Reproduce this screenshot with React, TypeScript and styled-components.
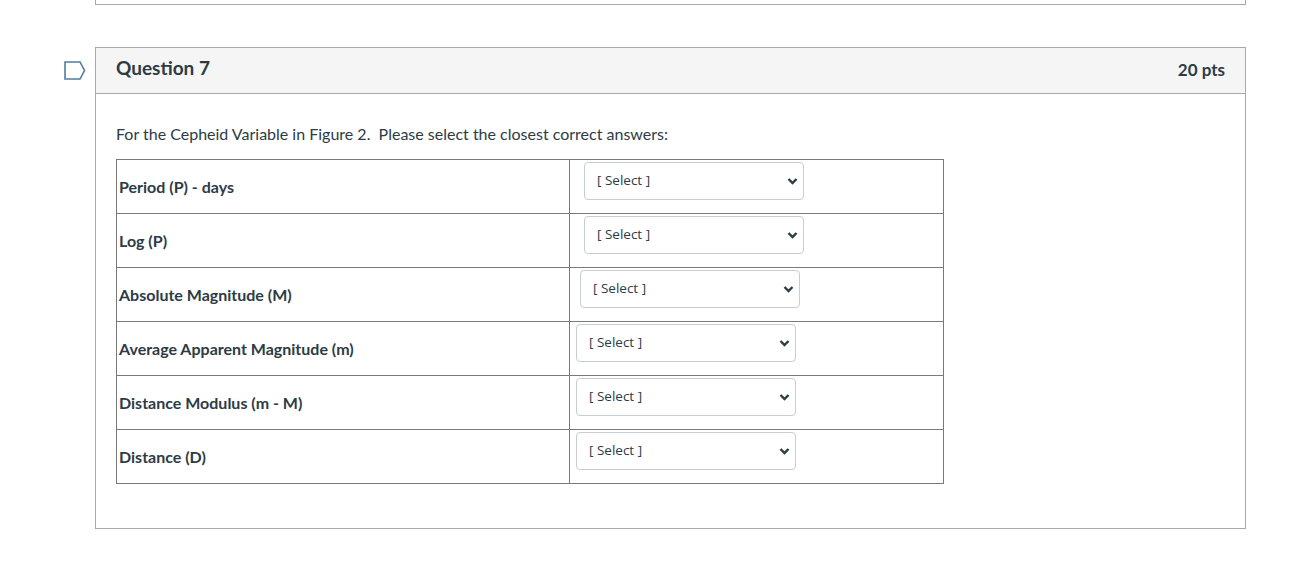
import styled, { createGlobalStyle } from 'styled-components';

const GlobalStyle = createGlobalStyle`
  body {
    margin: 0;
    background: #fff;
    font-family: Lato, "Liberation Sans", sans-serif;
    color: #2d3b45;
  }
`;

const rows = [
  { label: 'Period (P) - days', offset: 14 },
  { label: 'Log (P)', offset: 14 },
  { label: 'Absolute Magnitude (M)', offset: 10 },
  { label: 'Average Apparent Magnitude (m)', offset: 6 },
  { label: 'Distance Modulus (m - M)', offset: 6 },
  { label: 'Distance (D)', offset: 6 },
];

const Chevron = () => (
  <svg width="11" height="8" viewBox="0 0 11 8">
    <path d="M1.5 2 L5.5 6 L9.5 2" fill="none" stroke="#2d3b45" strokeWidth="2.4" />
  </svg>
);

const Flag = () => (
  <svg width="22" height="19" viewBox="0 0 22 19">
    <path d="M1 1 H16 L20.5 9.5 L16 18 H1 Z" fill="none" stroke="#4f7ca0" strokeWidth="1.6" />
  </svg>
);

const App = () => {
  return (
    <>
      <GlobalStyle />
      <Page>
        <PrevCard />
        <QuestionRow>
          <Gutter>
            <Flag />
          </Gutter>
          <Card>
            <Header>
              <Title>Question 7</Title>
              <Points>20 pts</Points>
            </Header>
            <Body>
              <Prompt>For the Cepheid Variable in Figure 2.&nbsp; Please select the closest correct answers:</Prompt>
              <Table>
                <tbody>
                  {rows.map((r) => (
                    <tr key={r.label}>
                      <LabelCell>{r.label}</LabelCell>
                      <SelectCell>
                        <SelectBox $offset={r.offset}>
                          <SelectText>[ Select ]</SelectText>
                          <Chevron />
                        </SelectBox>
                      </SelectCell>
                    </tr>
                  ))}
                </tbody>
              </Table>
            </Body>
          </Card>
        </QuestionRow>
      </Page>
    </>
  );
};

export default App;

const Page = styled.div`
  width: 1301px;
  height: 568px;
  overflow: hidden;
`;

const PrevCard = styled.div`
  margin-left: 95px;
  width: 1149px;
  height: 4px;
  border: 1px solid #a8a8a8;
  border-top: none;
`;

const QuestionRow = styled.div`
  display: flex;
  margin-top: 42px;
`;

const Gutter = styled.div`
  width: 95px;
  display: flex;
  justify-content: flex-end;
  padding-right: 9px;
  padding-top: 14px;
  box-sizing: border-box;
`;

const Card = styled.div`
  width: 1151px;
  height: 482px;
  box-sizing: border-box;
  border: 1px solid #a8a8a8;
`;

const Header = styled.div`
  height: 46px;
  box-sizing: border-box;
  background: #f5f5f5;
  border-bottom: 1px solid #a8a8a8;
  display: flex;
  align-items: center;
  justify-content: space-between;
  padding: 0 20px;
`;

const Title = styled.div`
  font-size: 19px;
  font-weight: 700;
  margin-top: -6px;
`;

const Points = styled.div`
  font-size: 17px;
  font-weight: 700;
  margin-top: -2px;
`;

const Body = styled.div`
  padding: 31px 20px 0 20px;
`;

const Prompt = styled.p`
  margin: 0 0 16px 0;
  font-size: 16px;
  line-height: 18px;
`;

const Table = styled.table`
  border-collapse: collapse;
  width: 828px;
`;

const LabelCell = styled.td`
  width: 453px;
  height: 54px;
  border: 1px solid #7a7a7a;
  padding: 0 2px;
  font-size: 16px;
  font-weight: 700;
  vertical-align: middle;
  box-sizing: border-box;
  line-height: 18px;
`;

const SelectCell = styled.td`
  border: 1px solid #7a7a7a;
  padding: 0;
  vertical-align: top;
`;

const SelectBox = styled.div<{ $offset: number }>`
  margin: 2px 0 0 ${(p) => p.$offset}px;
  width: 220px;
  height: 38px;
  box-sizing: border-box;
  border: 1px solid #c7cdd1;
  border-radius: 4px;
  background: #fff;
  display: flex;
  align-items: center;
  justify-content: space-between;
  padding: 0 5px 0 12px;
`;

const SelectText = styled.span`
  font-family: "Open Sans", "Liberation Sans", sans-serif;
  font-size: 13.5px;
  color: #2d3b45;
  margin-top: -3px;
`;
